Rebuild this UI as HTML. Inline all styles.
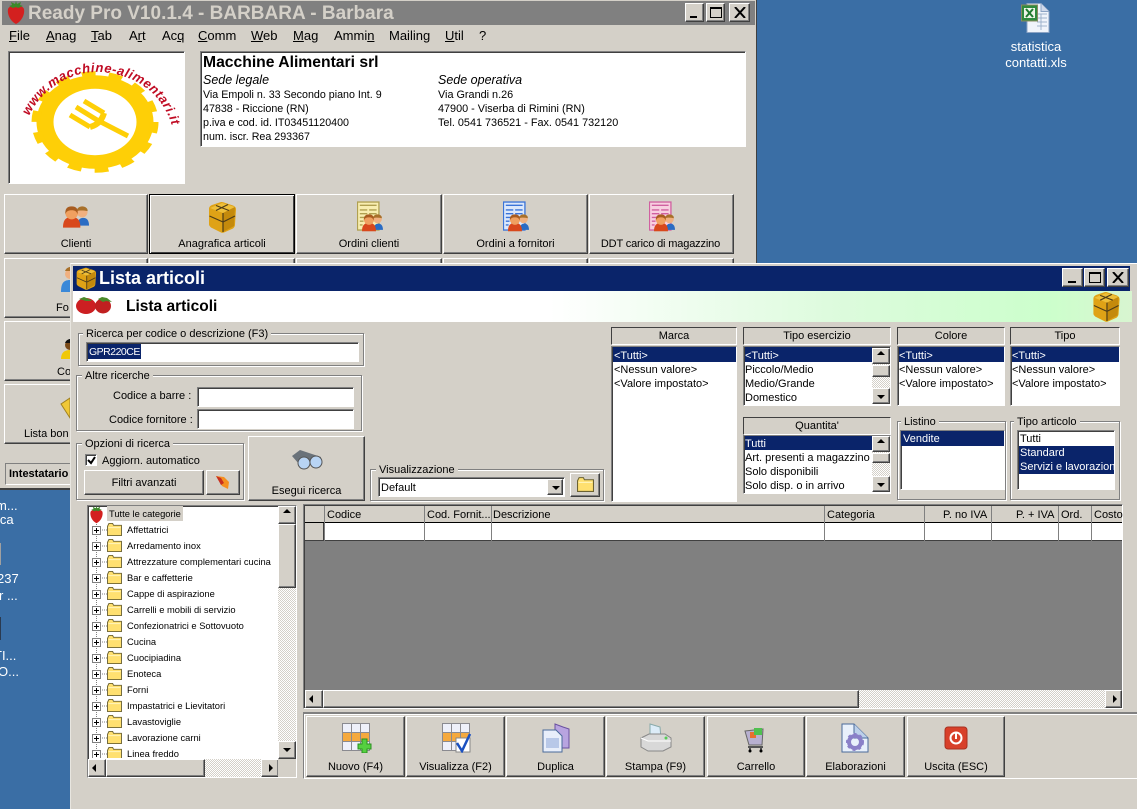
<!DOCTYPE html>
<html><head><meta charset="utf-8"><title>Ready Pro</title>
<style>
html,body{margin:0;padding:0}
body{width:1137px;height:809px;overflow:hidden;position:relative;background:#3a6ea5;font:11px/14px "Liberation Sans",sans-serif;color:#000}
div,svg{position:absolute;box-sizing:border-box}
.t{position:absolute;white-space:nowrap;line-height:14px;margin-top:1px}
.w{color:#fff}
.c{text-align:center}
.dk{font-size:13px}
.m{font-size:13px}
.i1{font-size:10.700px}
.i2{font-size:10.850px}
.b{position:absolute;box-sizing:border-box;background:#d4d0c8;border:1px solid;border-color:#fff #404040 #404040 #fff;box-shadow:inset -1px -1px 0 #808080}
.s{position:absolute;box-sizing:border-box;background:#fff;border:1px solid;border-color:#808080 #fff #fff #808080;box-shadow:inset 1px 1px 0 #404040}
.hd{position:absolute;box-sizing:border-box;background:#d4d0c8;border:1px solid;border-color:#404040 #fff #fff #404040;text-align:center;line-height:17px}
.f{position:absolute;box-sizing:border-box;border:1px solid #808080;box-shadow:1px 1px 0 #fff,inset 1px 1px 0 #fff}
.lg{position:absolute;background:#d4d0c8;padding:0 3px;line-height:13px;white-space:nowrap;margin-top:1px}
.sel{position:absolute;background:#0a246a}
.d{position:absolute;background:repeating-conic-gradient(#fff 0 25%,#d4d0c8 0 50%) 0 0/2px 2px}
.u::after,.n::after,.l::after,.r::after{content:"";position:absolute;width:0;height:0;border:4px solid transparent}
.u::after{left:4px;top:2px;border-bottom-color:#000;border-top-width:0}
.n::after{left:4px;top:6px;border-top-color:#000;border-bottom-width:0}
.l::after{left:3px;top:4px;border-right-color:#000;border-left-width:0}
.r::after{left:7px;top:4px;border-left-color:#000;border-right-width:0}
.col{position:absolute;top:0;width:1px;height:35px;background:#808080}
</style></head><body>

<svg width="0" height="0" style="left:0;top:0">
<defs>
<symbol id="straw" viewBox="0 0 20 24"><path d="M10 23C4 20 1 13 2 8c1-3 5-3 8-3s7 0 8 3c1 5-2 12-8 15z" fill="#d3201f"/><path d="M3 5l3-1-1-3 4 2 1-3 1 3 4-2-1 3 3 1-5 2-2-1-3 1z" fill="#3d8a2a"/></symbol>
<symbol id="cube" viewBox="0 0 30 32"><path d="M2 8c0-2 1-3 3-4l9-3c1 0 2 0 3 .5l9 3c2 1 3 2 3 4l-1 15c0 2-1 3-2 4l-9 4c-1 .5-2 .5-3 0l-10-5c-1-1-2-2-2-3z" fill="#dfa216"/><path d="M3 7l12-5 13 4-12 6z" fill="#eebf3a"/><path d="M16 12l12-6-1 19-11 6z" fill="#c48a0c"/><path d="M16 12v19M2.500 15l13.500 6 12-6M9 4.500l13 5M21 3.500L9 9.500" stroke="#4d3c18" stroke-width="1.200" fill="none"/></symbol>
<symbol id="ppl" viewBox="0 0 28 24"><path d="M15 22c0-5 2-8 6-8s6 3 6 8z" fill="#2a6cc4"/><circle cx="20" cy="8" r="5.500" fill="#f0b080"/><path d="M20 2c-3 0-6 2-5.500 5 2-1 7-1 11 0 .5-3-2.500-5-5.500-5z" fill="#a8702a"/><path d="M0 24c0-8 3-11 9-11s9 3 9 11z" fill="#d8481c"/><circle cx="9" cy="9" r="6.500" fill="#f0a060"/><path d="M9 2C4 2 2 5 2.500 10c1-3 3-4 6.500-4s5 1 6 4c1-5-1-8-6-8z" fill="#a85c20"/></symbol>
<symbol id="form" viewBox="0 0 30 32"><rect x=".5" y=".5" width="23" height="30" fill="var(--p,#f8eeb0)" stroke="var(--q,#b0a050)" stroke-width="1.400"/><path d="M3 4h18M3 9h8M13 9h8M3 13h8M13 13h8M3 17h6M3 21h4M3 25h3" stroke="var(--q,#a09040)" stroke-width="1.500"/><use href="#ppl" x="4" y="12" width="26" height="20"/></symbol>
<symbol id="fold" viewBox="0 0 16 14"><path d="M.5 3.500V13.500h15v-11H7L6 .5H2z" fill="#ffe070" stroke="#6b6232"/><path d="M1.500 5h13" stroke="#fff6c0"/></symbol>
<symbol id="plus" viewBox="0 0 9 9"><rect x=".5" y=".5" width="8" height="8" fill="#fff" stroke="#808080"/><path d="M2 4.500h5M4.500 2v5" stroke="#000"/></symbol>
<symbol id="grid" viewBox="0 0 28 30"><rect x=".5" y=".5" width="27" height="27" fill="#eef0fa" stroke="#8a8a90"/><rect x="1" y="10" width="26" height="9" fill="#f5a93e"/><path d="M9.500 0v28M18.500 0v28M0 9.500h28M0 18.500h28" stroke="#8a8a90"/></symbol>
<g id="row"><path d="M100 8h7" stroke="#808080" stroke-dasharray="1 1"/><use href="#plus" x="92" y="4" width="9" height="9"/><use href="#fold" x="107" y="1" width="15" height="13"/></g>
</defs>
</svg>

<!-- Desktop -->
<svg style="left:1021px;top:3px" width="30" height="30" viewBox="0 0 30 30"><path d="M6 .5h14l8 8v21H6z" fill="#f0f4fb" stroke="#8ba3c4"/><path d="M20 .5v8h8" fill="#cfd9ea" stroke="#8ba3c4"/><path d="M16 11h10M16 15h10M16 19h10M16 23h10M20 11v16" stroke="#9fb3cc"/><rect x=".5" y="2" width="16" height="16" fill="#2f8a3e" stroke="#8a8a60"/><rect x="3" y="5" width="11" height="10" fill="#eef5e8"/><path d="M5 6l7 8M12 6l-7 8" stroke="#1f7a30" stroke-width="2"/></svg>
<div class="t w c dk" style="left:996px;top:39px;width:80px">statistica</div>
<div class="t w c dk" style="left:996px;top:55px;width:80px">contatti.xls</div>
<div class="t w dk" style="left:-4px;top:498px">m...</div>
<div class="t w dk" style="left:-3px;top:512px">ica</div>
<div style="left:0;top:543px;width:1px;height:22px;background:#a0a0a0"></div>
<div class="t w dk" style="left:-3px;top:571px">237</div>
<div class="t w dk" style="left:-1px;top:588px">r ...</div>
<div style="left:0;top:617px;width:1px;height:23px;background:#2a3a50"></div>
<div class="t w dk" style="left:-6px;top:648px">TI...</div>
<div class="t w dk" style="left:-2px;top:664px">O...</div>

<!-- Main window -->
<div style="left:0;top:0;width:757px;height:490px;background:#d4d0c8;border-right:1px solid #404040;border-bottom:2px solid #404040"></div>
<div style="left:2px;top:1px;width:753px;height:24px;background:#808080"></div>
<svg style="left:6px;top:1px" width="20" height="24"><use href="#straw" width="20" height="24"/></svg>
<div class="t" style="left:28px;top:2px;font-size:19px;font-weight:bold;color:#d4d0c8;line-height:22px">Ready Pro V10.1.4 - BARBARA - Barbara</div>
<div class="b" style="left:685px;top:3px;width:19px;height:19px"><div style="left:4px;top:12px;width:7px;height:2px;background:#000"></div></div>
<div class="b" style="left:706px;top:3px;width:19px;height:19px"><div style="left:3px;top:3px;width:12px;height:11px;border:1px solid #000;border-top-width:2px"></div></div>
<div class="b" style="left:729px;top:3px;width:21px;height:19px"><svg style="left:4px;top:3px" width="12" height="11"><path d="M1 0l10 11M11 0L1 11" stroke="#000" stroke-width="2"/></svg></div>

<div class="t m" style="left:9px;top:28px"><u>F</u>ile</div>
<div class="t m" style="left:46px;top:28px"><u>A</u>nag</div>
<div class="t m" style="left:91px;top:28px"><u>T</u>ab</div>
<div class="t m" style="left:129px;top:28px">A<u>r</u>t</div>
<div class="t m" style="left:162px;top:28px">Ac<u>q</u></div>
<div class="t m" style="left:198px;top:28px"><u>C</u>omm</div>
<div class="t m" style="left:251px;top:28px"><u>W</u>eb</div>
<div class="t m" style="left:293px;top:28px"><u>M</u>ag</div>
<div class="t m" style="left:334px;top:28px">Ammi<u>n</u></div>
<div class="t m" style="left:389px;top:28px">Mailing</div>
<div class="t m" style="left:445px;top:28px"><u>U</u>til</div>
<div class="t m" style="left:479px;top:28px">?</div>

<!-- Logo -->
<div class="s" style="left:8px;top:51px;width:177px;height:133px"></div>
<svg style="left:9px;top:52px" width="175" height="131" viewBox="9 52 175 131">
<g transform="translate(95 122) scale(1 .8)" fill="none" stroke="#fecf07"><circle r="50" stroke-width="17"/><circle r="59" stroke-width="9" stroke-dasharray="13.500 13"/></g>
<g stroke="#fecf07" fill="none" stroke-linecap="butt"><path d="M97 120l31 16" stroke-width="5"/><path d="M70 115l20 12M76 107l21 13M84 101l20 12" stroke-width="5"/><path d="M104 113q-3 11-14 14" stroke-width="6"/></g>
<path id="arc" d="M29 116C43 87 72 71 100 72c34 2 62 20 72 54" fill="none"/>
<text font-family="Liberation Sans" font-weight="bold" font-style="italic" font-size="13" fill="#c00c24"><textPath href="#arc" textLength="184">www.macchine-alimentari.it</textPath></text>
</svg>

<!-- Info -->
<div class="s" style="left:200px;top:51px;width:546px;height:96px"></div>
<div class="t" style="left:203px;top:53px;font-size:15.700px;font-weight:bold;line-height:18px">Macchine Alimentari srl</div>
<div class="t" style="left:203px;top:72px;font-size:12.500px;font-style:italic">Sede legale</div>
<div class="t i1" style="left:203px;top:87px">Via Empoli n. 33 Secondo piano Int. 9</div>
<div class="t i1" style="left:203px;top:101px">47838 - Riccione (RN)</div>
<div class="t i1" style="left:203px;top:115px">p.iva e cod. id. IT03451120400</div>
<div class="t i1" style="left:203px;top:129px">num. iscr. Rea 293367</div>
<div class="t" style="left:438px;top:72px;font-size:12.500px;font-style:italic">Sede operativa</div>
<div class="t i2" style="left:438px;top:87px">Via Grandi n.26</div>
<div class="t i2" style="left:438px;top:101px">47900 - Viserba di Rimini (RN)</div>
<div class="t i2" style="left:438px;top:115px">Tel. 0541 736521 - Fax. 0541 732120</div>

<!-- Main buttons -->
<div class="b" style="left:4px;top:194px;width:144px;height:60px"></div>
<svg style="left:63px;top:204px" width="27" height="24"><use href="#ppl" width="27" height="24"/></svg>
<div class="t c" style="left:4px;top:236px;width:144px">Clienti</div>
<div class="b" style="left:149px;top:194px;width:146px;height:60px;border-color:#000;box-shadow:inset 1px 1px 0 #fff,inset -1px -1px 0 #404040"></div>
<svg style="left:207px;top:201px" width="30" height="32"><use href="#cube" width="30" height="32"/></svg>
<div class="t c" style="left:149px;top:236px;width:146px">Anagrafica articoli</div>
<div class="b" style="left:296px;top:194px;width:146px;height:60px"></div>
<svg style="left:357px;top:201px;--p:#f8eeb0;--q:#b0a050" width="28" height="31"><use href="#form" width="28" height="31"/></svg>
<div class="t c" style="left:296px;top:236px;width:146px">Ordini clienti</div>
<div class="b" style="left:443px;top:194px;width:145px;height:60px"></div>
<svg style="left:503px;top:201px;--p:#dce8fb;--q:#3a74d8" width="28" height="31"><use href="#form" width="28" height="31"/></svg>
<div class="t c" style="left:443px;top:236px;width:145px">Ordini a fornitori</div>
<div class="b" style="left:589px;top:194px;width:145px;height:60px"></div>
<svg style="left:649px;top:201px;--p:#f8cfe0;--q:#d060a0" width="28" height="31"><use href="#form" width="28" height="31"/></svg>
<div class="t c" style="left:589px;top:236px;width:143px;letter-spacing:-.15px">DDT carico di magazzino</div>

<div class="b" style="left:4px;top:258px;width:144px;height:60px"></div>
<div class="b" style="left:149px;top:258px;width:146px;height:60px"></div>
<div class="b" style="left:296px;top:258px;width:146px;height:60px"></div>
<div class="b" style="left:443px;top:258px;width:145px;height:60px"></div>
<div class="b" style="left:589px;top:258px;width:145px;height:60px"></div>
<div class="t" style="left:56px;top:300px">Fo</div>
<svg style="left:60px;top:266px" width="10" height="26"><circle cx="10" cy="8" r="5" fill="#f0b080"/><path d="M5 5c1-3 4-4 5-4v4z" fill="#a8702a"/><path d="M1 26c0-8 2-12 9-12v12z" fill="#3a88d8"/></svg>
<div class="b" style="left:4px;top:321px;width:144px;height:60px"></div>
<div class="t" style="left:57px;top:364px">Co</div>
<svg style="left:60px;top:338px" width="10" height="22"><circle cx="10" cy="7" r="5" fill="#7a4a18"/><path d="M5 5c1-3 4-4 5-4v4z" fill="#111"/><path d="M1 21c0-6 3-9 9-9v9z" fill="#f0c808"/></svg>
<div class="b" style="left:4px;top:384px;width:144px;height:60px"></div>
<div class="t" style="left:24px;top:426px">Lista bon</div>
<svg style="left:60px;top:396px" width="10" height="24"><path d="M1 8l9 14V2z" fill="#f0c838" stroke="#a08020"/></svg>
<div class="s" style="left:5px;top:463px;width:200px;height:22px;background:#d4d0c8;box-shadow:none"></div>
<div class="t" style="left:9px;top:466px;font-weight:bold">Intestatario</div>

<!-- List window -->
<div style="left:70px;top:263px;width:1067px;height:546px;background:#d4d0c8;border-left:1px solid #e8e6e0;border-top:1px solid #fff"></div>
<div style="left:73px;top:266px;width:1057px;height:25px;background:#0a246a"></div>
<svg style="left:75px;top:267px" width="22" height="23"><use href="#cube" width="22" height="23"/></svg>
<div class="t w" style="left:99px;top:267px;font-size:18px;font-weight:bold;line-height:21px">Lista articoli</div>
<div class="b" style="left:1062px;top:268px;width:21px;height:19px"><div style="left:5px;top:12px;width:8px;height:2px;background:#000"></div></div>
<div class="b" style="left:1084px;top:268px;width:21px;height:19px"><div style="left:4px;top:3px;width:12px;height:11px;border:1px solid #000;border-top-width:2px"></div></div>
<div class="b" style="left:1107px;top:268px;width:22px;height:19px"><svg style="left:4px;top:3px" width="12" height="11"><path d="M1 0l10 11M11 0L1 11" stroke="#000" stroke-width="2"/></svg></div>

<div style="left:73px;top:291px;width:1059px;height:31px;background:linear-gradient(90deg,#fff 45%,#ddfbdd 72%,#ccffcc 92%,#d8f5d0)"></div>
<svg style="left:76px;top:293px" width="38" height="22" viewBox="0 0 38 22"><ellipse cx="10" cy="13" rx="10" ry="8" fill="#cc1f22"/><ellipse cx="27" cy="13" rx="8" ry="7.500" fill="#c02020"/><path d="M3 6l5-2 5 2 3 2-6 0zM22 6l4-2 5 1 5 4-6-1-3 1z" fill="#4a8a2a"/></svg>
<div class="t" style="left:126px;top:297px;font-size:15.500px;font-weight:bold;line-height:17px">Lista articoli</div>
<svg style="left:1091px;top:291px" width="30" height="31"><use href="#cube" width="30" height="31"/></svg>

<!-- Search -->
<div class="f" style="left:78px;top:333px;width:286px;height:33px"></div>
<div class="lg" style="left:83px;top:327px">Ricerca per codice o descrizione (F3)</div>
<div class="s" style="left:86px;top:342px;width:273px;height:20px"></div>
<div class="sel" style="left:88px;top:344px;width:53px;height:15px"></div>
<div class="t w" style="left:89px;top:344px;font-size:10.500px;letter-spacing:-.5px">GPR220CE</div>

<div class="f" style="left:76px;top:375px;width:286px;height:56px"></div>
<div class="lg" style="left:82px;top:369px">Altre ricerche</div>
<div class="t" style="left:113px;top:388px">Codice a barre :</div>
<div class="s" style="left:197px;top:387px;width:157px;height:20px"></div>
<div class="t" style="left:109px;top:412px">Codice fornitore :</div>
<div class="s" style="left:197px;top:409px;width:157px;height:20px"></div>

<div class="f" style="left:76px;top:443px;width:168px;height:57px"></div>
<div class="lg" style="left:82px;top:437px">Opzioni di ricerca</div>
<div class="s" style="left:85px;top:454px;width:12px;height:12px"><svg style="left:1px;top:1px" width="9" height="9"><path d="M1 4l3 3 4-6" fill="none" stroke="#000" stroke-width="2"/></svg></div>
<div class="t" style="left:102px;top:453px">Aggiorn. automatico</div>
<div class="b" style="left:84px;top:470px;width:120px;height:25px"></div>
<div class="t c" style="left:84px;top:475px;width:120px">Filtri avanzati</div>
<div class="b" style="left:206px;top:470px;width:34px;height:25px"><svg style="left:8px;top:3px" width="16" height="16"><path d="M1 2l8 1 5 5-1 7-6-3z" fill="#f59020"/><path d="M1 2l5 2 3 5-3 2z" fill="#c83020"/></svg></div>
<div class="b" style="left:248px;top:436px;width:117px;height:65px"></div>
<svg style="left:291px;top:449px" width="32" height="21" viewBox="0 0 32 21"><path d="M1 7l8-6 21 7-2 6H11l-3 1z" fill="#6a727a"/><circle cx="13" cy="14" r="6" fill="#b8d4f4" stroke="#555"/><circle cx="25" cy="13" r="6" fill="#b8d4f4" stroke="#555"/></svg>
<div class="t c" style="left:248px;top:483px;width:117px">Esegui ricerca</div>

<div class="f" style="left:370px;top:469px;width:234px;height:32px"></div>
<div class="lg" style="left:376px;top:463px">Visualizzazione</div>
<div class="s" style="left:378px;top:477px;width:187px;height:20px"></div>
<div class="t" style="left:381px;top:480px">Default</div>
<div class="b n" style="left:547px;top:479px;width:16px;height:16px"></div>
<div class="b" style="left:570px;top:473px;width:30px;height:24px"><svg style="left:6px;top:3px" width="17" height="16"><use href="#fold" width="17" height="15"/></svg></div>

<!-- Filters -->
<div class="hd" style="left:611px;top:327px;width:126px;height:18px">Marca</div>
<div class="s" style="left:611px;top:346px;width:126px;height:156px"></div>
<div class="sel" style="left:613px;top:347px;width:123px;height:15px"></div>
<div class="t w" style="left:614px;top:348px">&lt;Tutti&gt;</div>
<div class="t" style="left:614px;top:362px">&lt;Nessun valore&gt;</div>
<div class="t" style="left:614px;top:376px">&lt;Valore impostato&gt;</div>

<div class="hd" style="left:743px;top:327px;width:148px;height:18px">Tipo esercizio</div>
<div class="s" style="left:743px;top:346px;width:148px;height:60px"></div>
<div class="sel" style="left:745px;top:347px;width:127px;height:15px"></div>
<div class="t w" style="left:745px;top:348px">&lt;Tutti&gt;</div>
<div class="t" style="left:745px;top:362px">Piccolo/Medio</div>
<div class="t" style="left:745px;top:376px">Medio/Grande</div>
<div class="t" style="left:745px;top:390px">Domestico</div>
<div class="d" style="left:872px;top:348px;width:18px;height:56px"></div>
<div class="b u" style="left:872px;top:348px;width:18px;height:16px"></div>
<div class="b" style="left:872px;top:365px;width:18px;height:12px"></div>
<div class="b n" style="left:872px;top:388px;width:18px;height:16px"></div>

<div class="hd" style="left:743px;top:417px;width:148px;height:18px">Quantita'</div>
<div class="s" style="left:743px;top:435px;width:148px;height:59px"></div>
<div class="sel" style="left:745px;top:436px;width:127px;height:14px"></div>
<div class="t w" style="left:745px;top:436px">Tutti</div>
<div class="t" style="left:745px;top:450px">Art. presenti a magazzino</div>
<div class="t" style="left:745px;top:464px">Solo disponibili</div>
<div class="t" style="left:745px;top:478px">Solo disp. o in arrivo</div>
<div class="d" style="left:872px;top:436px;width:18px;height:56px"></div>
<div class="b u" style="left:872px;top:436px;width:18px;height:16px"></div>
<div class="b" style="left:872px;top:453px;width:18px;height:10px"></div>
<div class="b n" style="left:872px;top:476px;width:18px;height:16px"></div>

<div class="hd" style="left:897px;top:327px;width:108px;height:18px">Colore</div>
<div class="s" style="left:897px;top:346px;width:108px;height:60px"></div>
<div class="sel" style="left:899px;top:347px;width:105px;height:15px"></div>
<div class="t w" style="left:899px;top:348px">&lt;Tutti&gt;</div>
<div class="t" style="left:899px;top:362px">&lt;Nessun valore&gt;</div>
<div class="t" style="left:899px;top:376px">&lt;Valore impostato&gt;</div>

<div class="hd" style="left:1010px;top:327px;width:110px;height:18px">Tipo</div>
<div class="s" style="left:1010px;top:346px;width:110px;height:60px"></div>
<div class="sel" style="left:1012px;top:347px;width:107px;height:15px"></div>
<div class="t w" style="left:1012px;top:348px">&lt;Tutti&gt;</div>
<div class="t" style="left:1012px;top:362px">&lt;Nessun valore&gt;</div>
<div class="t" style="left:1012px;top:376px">&lt;Valore impostato&gt;</div>

<div class="f" style="left:897px;top:421px;width:109px;height:79px"></div>
<div class="lg" style="left:901px;top:415px">Listino</div>
<div class="s" style="left:900px;top:430px;width:105px;height:60px"></div>
<div class="sel" style="left:901px;top:431px;width:103px;height:15px"></div>
<div class="t w" style="left:903px;top:431px">Vendite</div>

<div class="f" style="left:1010px;top:421px;width:110px;height:79px"></div>
<div class="lg" style="left:1014px;top:415px">Tipo articolo</div>
<div class="s" style="left:1017px;top:430px;width:98px;height:60px"></div>
<div class="t" style="left:1020px;top:431px">Tutti</div>
<div class="sel" style="left:1019px;top:446px;width:95px;height:28px"></div>
<div class="t w" style="left:1020px;top:445px">Standard</div>
<div style="left:1020px;top:459px;width:94px;height:15px;overflow:hidden"><div class="t w" style="left:0;top:0">Servizi e lavorazioni</div></div>

<!-- Tree -->
<div class="s" style="left:87px;top:505px;width:210px;height:273px"></div>
<svg style="left:88px;top:506px" width="190" height="252" viewBox="88 506 190 252"><path d="M96.500 522V754" stroke="#808080" stroke-dasharray="1 1"/>
<use href="#straw" x="89" y="506" width="15" height="18"/>
<use href="#row" y="522"/><use href="#row" y="538"/><use href="#row" y="554"/><use href="#row" y="570"/><use href="#row" y="586"/><use href="#row" y="602"/><use href="#row" y="618"/><use href="#row" y="634"/><use href="#row" y="650"/><use href="#row" y="666"/><use href="#row" y="682"/><use href="#row" y="698"/><use href="#row" y="714"/><use href="#row" y="730"/><use href="#row" y="746"/>
</svg>
<div style="left:107px;top:506px;width:76px;height:15px;background:#d4d0c8"></div>
<div style="left:0;top:1px;width:300px;height:760px;font-size:9.350px;overflow:hidden">
<div class="t" style="left:109px;top:505px">Tutte le categorie</div>
<div class="t" style="left:127px;top:521px">Affettatrici</div>
<div class="t" style="left:127px;top:537px">Arredamento inox</div>
<div class="t" style="left:127px;top:553px">Attrezzature complementari cucina</div>
<div class="t" style="left:127px;top:569px">Bar e caffetterie</div>
<div class="t" style="left:127px;top:585px">Cappe di aspirazione</div>
<div class="t" style="left:127px;top:601px">Carrelli e mobili di servizio</div>
<div class="t" style="left:127px;top:617px">Confezionatrici e Sottovuoto</div>
<div class="t" style="left:127px;top:633px">Cucina</div>
<div class="t" style="left:127px;top:649px">Cuocipiadina</div>
<div class="t" style="left:127px;top:665px">Enoteca</div>
<div class="t" style="left:127px;top:681px">Forni</div>
<div class="t" style="left:127px;top:697px">Impastatrici e Lievitatori</div>
<div class="t" style="left:127px;top:713px">Lavastoviglie</div>
<div class="t" style="left:127px;top:729px">Lavorazione carni</div>
<div class="t" style="left:127px;top:745px">Linea freddo</div>
</div>
<div class="d" style="left:278px;top:506px;width:18px;height:253px"></div>
<div class="b u" style="left:278px;top:506px;width:18px;height:18px"></div>
<div class="b" style="left:278px;top:524px;width:18px;height:64px"></div>
<div class="b n" style="left:278px;top:741px;width:18px;height:18px"></div>
<div class="d" style="left:88px;top:759px;width:190px;height:18px"></div>
<div class="b l" style="left:88px;top:759px;width:18px;height:18px"></div>
<div class="b" style="left:106px;top:759px;width:99px;height:18px"></div>
<div class="b r" style="left:261px;top:759px;width:18px;height:18px"></div>
<div style="left:278px;top:759px;width:18px;height:18px;background:#d4d0c8"></div>

<!-- Grid -->
<div class="s" style="left:303px;top:504px;width:820px;height:205px;background:#808080"></div>
<div style="left:305px;top:506px;width:817px;height:17px;background:#d4d0c8;border-bottom:1px solid #000"></div>
<div style="left:305px;top:523px;width:817px;height:18px;background:#fff;border-bottom:1px solid #404040"></div>
<div style="left:305px;top:523px;width:19px;height:17px;background:#d4d0c8;border-right:1px solid #404040"></div>
<div style="left:305px;top:506px;width:817px;height:35px">
<div class="col" style="left:19px"></div><div class="col" style="left:119px"></div><div class="col" style="left:186px"></div><div class="col" style="left:519px"></div><div class="col" style="left:619px"></div><div class="col" style="left:686px"></div><div class="col" style="left:753px"></div><div class="col" style="left:786px"></div>
</div>
<div class="t" style="left:327px;top:507px">Codice</div>
<div class="t" style="left:427px;top:507px">Cod. Fornit...</div>
<div class="t" style="left:493px;top:507px">Descrizione</div>
<div class="t" style="left:827px;top:507px">Categoria</div>
<div class="t" style="left:943px;top:507px">P. no IVA</div>
<div class="t" style="left:1016px;top:507px">P. + IVA</div>
<div class="t" style="left:1061px;top:507px">Ord.</div>
<div class="t" style="left:1094px;top:507px">Costo</div>
<div class="d" style="left:305px;top:690px;width:817px;height:18px"></div>
<div class="b l" style="left:305px;top:690px;width:18px;height:18px"></div>
<div class="b" style="left:323px;top:690px;width:536px;height:18px"></div>
<div class="b r" style="left:1105px;top:690px;width:17px;height:18px"></div>

<!-- Toolbar -->
<div style="left:303px;top:712px;width:834px;height:67px;border-top:2px solid #808080;border-left:1px solid #808080;border-bottom:1px solid #fff;box-shadow:inset 1px 1px 0 #fff"></div>
<div class="b" style="left:306px;top:716px;width:99px;height:61px"></div>
<div class="b" style="left:406px;top:716px;width:99px;height:61px"></div>
<div class="b" style="left:506px;top:716px;width:99px;height:61px"></div>
<div class="b" style="left:606px;top:716px;width:99px;height:61px"></div>
<div class="b" style="left:707px;top:716px;width:98px;height:61px"></div>
<div class="b" style="left:806px;top:716px;width:99px;height:61px"></div>
<div class="b" style="left:907px;top:716px;width:98px;height:61px"></div>
<svg style="left:342px;top:723px" width="30" height="30" viewBox="0 0 30 30"><use href="#grid" width="28" height="30"/><path d="M20 16h5v5h4v5h-4v4h-5v-4h-4v-5h4z" fill="#55d040" stroke="#2a9020"/></svg>
<svg style="left:442px;top:723px" width="30" height="30" viewBox="0 0 30 30"><use href="#grid" width="28" height="30"/><rect x="14" y="15" width="14" height="14" fill="#fff" stroke="#888"/><path d="M15 20l5 8 8-17" fill="none" stroke="#1a50c0" stroke-width="2.500"/></svg>
<svg style="left:542px;top:723px" width="28" height="30" viewBox="0 0 28 30"><path d="M13 1l8 3 6 2v19H13z" fill="#b8a4e0" stroke="#6a50a0"/><path d="M1 7h13l6 6v16H1z" fill="#e8eefa" stroke="#4a6a9a"/><path d="M4 15h13v10H4z" fill="#b8c8e8"/></svg>
<svg style="left:640px;top:723px" width="32" height="30" viewBox="0 0 32 30"><path d="M10 1l10 3 1 12H10z" fill="#dcecf8" stroke="#8aa"/><path d="M1 15l8-4h16l6 4v9l-8 4H8l-7-4z" fill="#d8d8d8" stroke="#888"/><path d="M1 15l7 3h23" stroke="#fff" fill="none"/><circle cx="26" cy="15" r="1.500" fill="#5c5"/></svg>
<svg style="left:743px;top:723px" width="26" height="30" viewBox="0 0 26 30"><path d="M2 8l18-2-1 16H6z" fill="#b8b0d0" stroke="#666"/><rect x="7" y="9" width="6" height="6" fill="#e87030"/><rect x="11" y="5" width="8" height="7" fill="#50c050"/><path d="M5 24h15M7 24v4M18 24v4" stroke="#555" stroke-width="2"/><circle cx="7" cy="28" r="1.500"/><circle cx="18" cy="28" r="1.500"/></svg>
<svg style="left:840px;top:723px" width="30" height="30" viewBox="0 0 30 30"><path d="M2 1h12l14 14v14H2z" fill="#e8f0fb" stroke="#4a6a9a"/><path d="M14 1v14h14" fill="#bcd0ea" stroke="#4a6a9a"/><circle cx="15" cy="19" r="6" fill="none" stroke="#8a80c8" stroke-width="4"/><circle cx="15" cy="19" r="8" fill="none" stroke="#8a80c8" stroke-width="2" stroke-dasharray="3 3"/></svg>
<svg style="left:944px;top:726px" width="24" height="24" viewBox="0 0 24 24"><rect x="1" y="1" width="22" height="22" rx="3" fill="#d8402a" stroke="#a83020"/><circle cx="12" cy="12" r="5.500" fill="none" stroke="#fff" stroke-width="2"/><path d="M12 6v7" stroke="#fff" stroke-width="2"/></svg>
<div class="t c" style="left:306px;top:759px;width:99px">Nuovo (F4)</div>
<div class="t c" style="left:406px;top:759px;width:99px">Visualizza (F2)</div>
<div class="t c" style="left:506px;top:759px;width:99px">Duplica</div>
<div class="t c" style="left:606px;top:759px;width:99px">Stampa (F9)</div>
<div class="t c" style="left:707px;top:759px;width:98px">Carrello</div>
<div class="t c" style="left:806px;top:759px;width:99px">Elaborazioni</div>
<div class="t c" style="left:907px;top:759px;width:98px">Uscita (ESC)</div>

</body></html>
